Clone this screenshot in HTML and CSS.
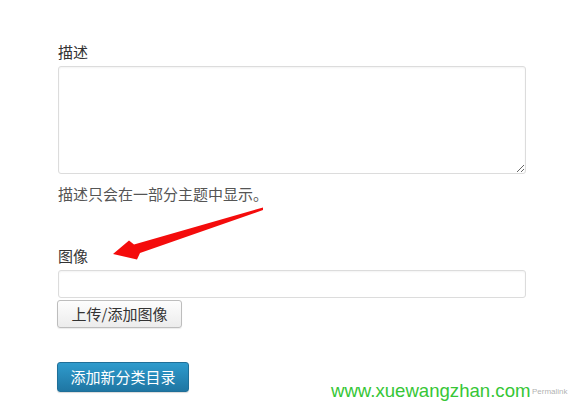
FILE: index.html
```html
<!DOCTYPE html>
<html lang="zh-CN">
<head>
<meta charset="utf-8">
<title>添加新分类目录</title>
<link rel="stylesheet" href="styles.css">
</head>
<body>
<div class="page">
  <form class="form">
    <div class="field">
      <label class="label">描述</label>
      <div class="textarea-wrap">
        <textarea class="textarea"></textarea>
      </div>
      <p class="help">描述只会在一部分主题中显示。</p>
    </div>
    <div class="field field-image">
      <label class="label">图像</label>
      <input class="input" type="text">
      <button type="button" class="btn">上传/添加图像</button>
    </div>
    <div class="submit-row">
      <button type="button" class="btn-primary">添加新分类目录</button>
    </div>
  </form>
  <div class="watermark">www.xuewangzhan.com</div>
  <div class="permalink">Permalink</div>
  <svg class="arrow" width="570" height="406" viewBox="0 0 570 406" aria-hidden="true">
    <polygon points="113,254 129,240.5 134,244.5 263,207.5 263,210 140,253 137,259.5" fill="#f40c0c"/>
  </svg>
</div>
</body>
</html>
```
FILE: styles.css
```css
html, body {
  margin: 0;
  padding: 0;
  background: #ffffff;
}
body {
  font-family: "Noto Sans CJK SC", "Noto Sans", sans-serif;
  font-size: 15px;
  color: #333;
}
.page {
  position: relative;
  width: 570px;
  height: 406px;
  overflow: hidden;
}
.form {
  padding: 42px 0 0 58px;
  width: 468px;
}
.field {
  display: flex;
  flex-direction: column;
}
.label {
  display: block;
  font-size: 15px;
  line-height: 20px;
  height: 20px;
  color: #333;
  margin-bottom: 4px;
}
.textarea-wrap {
  display: flex;
}
.textarea {
  box-sizing: border-box;
  width: 468px;
  height: 108px;
  margin: 0;
  border: 1px solid #dcdcdc;
  border-radius: 3px;
  box-shadow: inset 0 1px 2px rgba(0,0,0,0.05);
  background: #fff;
  resize: both;
  font-family: inherit;
}
.help {
  margin: 10px 0 0 0;
  font-size: 15px;
  line-height: 20px;
  color: #555;
}
.field-image {
  margin-top: 42px;
}
.input {
  box-sizing: border-box;
  width: 468px;
  height: 28px;
  margin: 0;
  border: 1px solid #dcdcdc;
  border-radius: 3px;
  box-shadow: inset 0 1px 2px rgba(0,0,0,0.05);
  background: #fff;
}
.btn {
  box-sizing: border-box;
  align-self: flex-start;
  margin: 2px 0 0 -1px;
  width: 125px;
  height: 28px;
  padding: 0;
  border: 1px solid #bdbdbd;
  border-radius: 3px;
  background: linear-gradient(#fdfdfd, #ececec);
  box-shadow: 0 1px 1px rgba(0,0,0,0.08);
  font-family: inherit;
  font-size: 15px;
  line-height: 26px;
  color: #333;
}
.submit-row {
  margin-top: 34px;
  display: flex;
}
.btn-primary {
  box-sizing: border-box;
  margin-left: -1px;
  width: 132px;
  height: 30px;
  padding: 0;
  border: 1px solid #1f6f98;
  border-radius: 3px;
  background: linear-gradient(#2f9bcd, #1f76a3);
  box-shadow: 0 1px 1px rgba(0,0,0,0.15);
  font-family: inherit;
  font-size: 15px;
  line-height: 28px;
  color: #fff;
}
.watermark {
  position: absolute;
  left: 331px;
  top: 380px;
  font-family: "Liberation Sans", Arial, sans-serif;
  font-size: 18.6px;
  line-height: 22px;
  color: #36c636;
}
.permalink {
  position: absolute;
  left: 532px;
  top: 386px;
  font-family: "Liberation Sans", Arial, sans-serif;
  font-size: 8px;
  line-height: 11px;
  color: rgba(120,120,120,0.6);
}
.arrow {
  position: absolute;
  left: 0;
  top: 0;
  pointer-events: none;
}
```
